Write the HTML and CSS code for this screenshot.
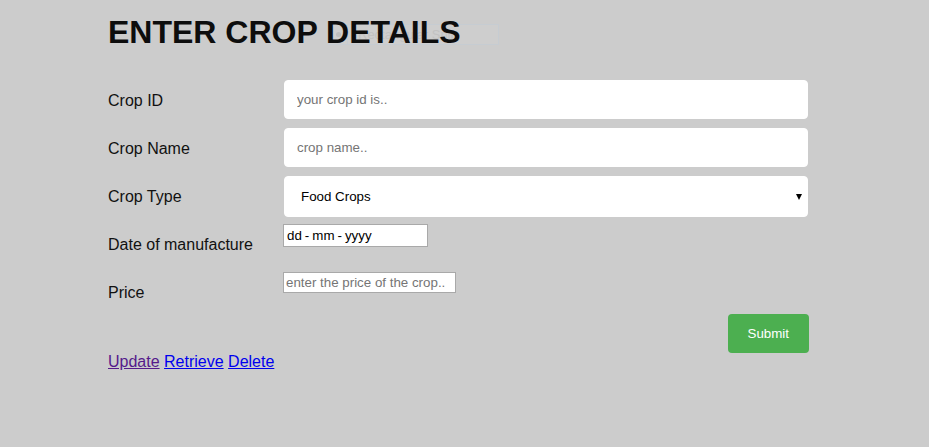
FILE: index.html
```html
<!DOCTYPE html>
<html lang="en">
<head>
<meta charset="utf-8">
<title>Enter Crop Details</title>
<link rel="stylesheet" href="styles.css">
</head>
<body>
<div class="page">
  <div class="title-wrap">
    <div class="snip"><span class="snip-dot"></span><span class="snip-sep"></span><span class="snip-text">Rectangular Snip</span></div>
    <h1 class="title">ENTER CROP DETAILS</h1>
  </div>
  <form class="form" onsubmit="return false">
    <div class="row">
      <label class="label" for="cid">Crop ID</label>
      <div class="field"><input class="text-input" id="cid" type="text" placeholder="your crop id is.."></div>
    </div>
    <div class="row">
      <label class="label" for="cname">Crop Name</label>
      <div class="field"><input class="text-input" id="cname" type="text" placeholder="crop name.."></div>
    </div>
    <div class="row">
      <label class="label" for="ctype">Crop Type</label>
      <div class="field">
        <div class="select-wrap">
          <select class="select" id="ctype">
            <option>Food Crops</option>
            <option>Cash Crops</option>
            <option>Plantation Crops</option>
            <option>Horticulture Crops</option>
          </select>
        </div>
      </div>
    </div>
    <div class="row">
      <label class="label">Date of manufacture</label>
      <div class="field"><div class="date-box"><span>dd</span><span class="sep">-</span><span>mm</span><span class="sep">-</span><span>yyyy</span></div></div>
    </div>
    <div class="row">
      <label class="label" for="price">Price</label>
      <div class="field"><input class="small-input" id="price" type="text" placeholder="enter the price of the crop.."></div>
    </div>
    <div class="submit-row">
      <button class="submit" type="submit">Submit</button>
    </div>
  </form>
  <div class="links">
    <a class="link visited" href="#update">Update</a>
    <a class="link" href="#retrieve">Retrieve</a>
    <a class="link" href="#delete">Delete</a>
  </div>
</div>
</body>
</html>
```
FILE: styles.css
```css
html, body {
  margin: 0;
  padding: 0;
  background: #cccccc;
}
body {
  font-family: "Liberation Sans", Arial, sans-serif;
  color: #111;
}
.page {
  width: 700px;
  padding: 14px 0 0 108px;
}
.title-wrap {
  position: relative;
}
.title {
  position: relative;
  margin: 0 0 23px 0;
  font-size: 32px;
  line-height: 37px;
  font-weight: bold;
  color: #0d0d0d;
}
.snip {
  position: absolute;
  left: 220px;
  top: 10px;
  width: 171px;
  height: 21px;
  border: 1px solid #c6ccd2;
  background: #cecece;
  display: flex;
  align-items: center;
  box-sizing: border-box;
}
.snip-dot {
  width: 5px;
  height: 5px;
  border-radius: 50%;
  background: #bdbdbd;
  margin: 0 6px 0 7px;
}
.snip-sep {
  width: 1px;
  height: 19px;
  background: #c6ccd2;
  margin-right: 10px;
}
.snip-text {
  font-size: 13px;
  color: #c2c2c2;
}
.form {
  display: flex;
  flex-direction: column;
}
.row {
  display: flex;
  height: 48px;
}
.label {
  width: 176px;
  box-sizing: border-box;
  padding: 11px 12px 12px 0;
  margin-top: 6px;
  font-size: 16px;
  line-height: 19px;
  color: #111;
  align-self: flex-start;
}
.field {
  flex: 1;
  margin-top: 6px;
}
.text-input {
  display: block;
  width: 524px;
  height: 39px;
  box-sizing: border-box;
  padding: 12px;
  border: 1px solid #ffffff;
  border-radius: 4px;
  background: #fff;
  font-family: "Liberation Sans", Arial, sans-serif;
  font-size: 13.33px;
  color: #111;
  outline: none;
}
.text-input::placeholder,
.small-input::placeholder {
  color: #757575;
}
.select-wrap {
  position: relative;
  width: 524px;
}
.select-wrap::after {
  content: "";
  position: absolute;
  right: 6px;
  top: 18px;
  border-left: 3.5px solid transparent;
  border-right: 3.5px solid transparent;
  border-top: 6px solid #000;
  pointer-events: none;
}
.select {
  display: block;
  width: 524px;
  height: 41px;
  box-sizing: border-box;
  padding: 0 0 0 16px;
  border: 1px solid #ffffff;
  border-radius: 4px;
  background: #fff;
  -webkit-appearance: none;
  appearance: none;
  font-family: "Liberation Sans", Arial, sans-serif;
  font-size: 13.33px;
  color: #000;
  outline: none;
}
.date-box {
  width: 145px;
  height: 23px;
  box-sizing: border-box;
  border: 1px solid #a9a9a9;
  background: #fff;
  display: flex;
  align-items: center;
  padding-left: 3px;
  margin-left: -1px;
  font-size: 13.33px;
  color: #000;
}
.date-box .sep {
  margin: 0 3px;
}
.small-input {
  display: block;
  width: 173px;
  height: 21px;
  box-sizing: border-box;
  margin-left: -1px;
  padding: 1px 2px;
  border: 1px solid #a9a9a9;
  background: #fff;
  font-family: "Liberation Sans", Arial, sans-serif;
  font-size: 13.33px;
  outline: none;
}
.submit-row {
  display: flex;
  justify-content: flex-end;
  margin-right: -1px;
}
.submit {
  height: 39px;
  padding: 0 20px;
  border: none;
  border-radius: 4px;
  background: #4caf50;
  color: #fff;
  font-family: "Liberation Sans", Arial, sans-serif;
  font-size: 13.33px;
  cursor: pointer;
}
.links {
  margin-top: 0;
  font-size: 16px;
  line-height: 18px;
}
.link {
  color: #0000ee;
  text-decoration: underline;
}
.link.visited {
  color: #551a8b;
}
```
